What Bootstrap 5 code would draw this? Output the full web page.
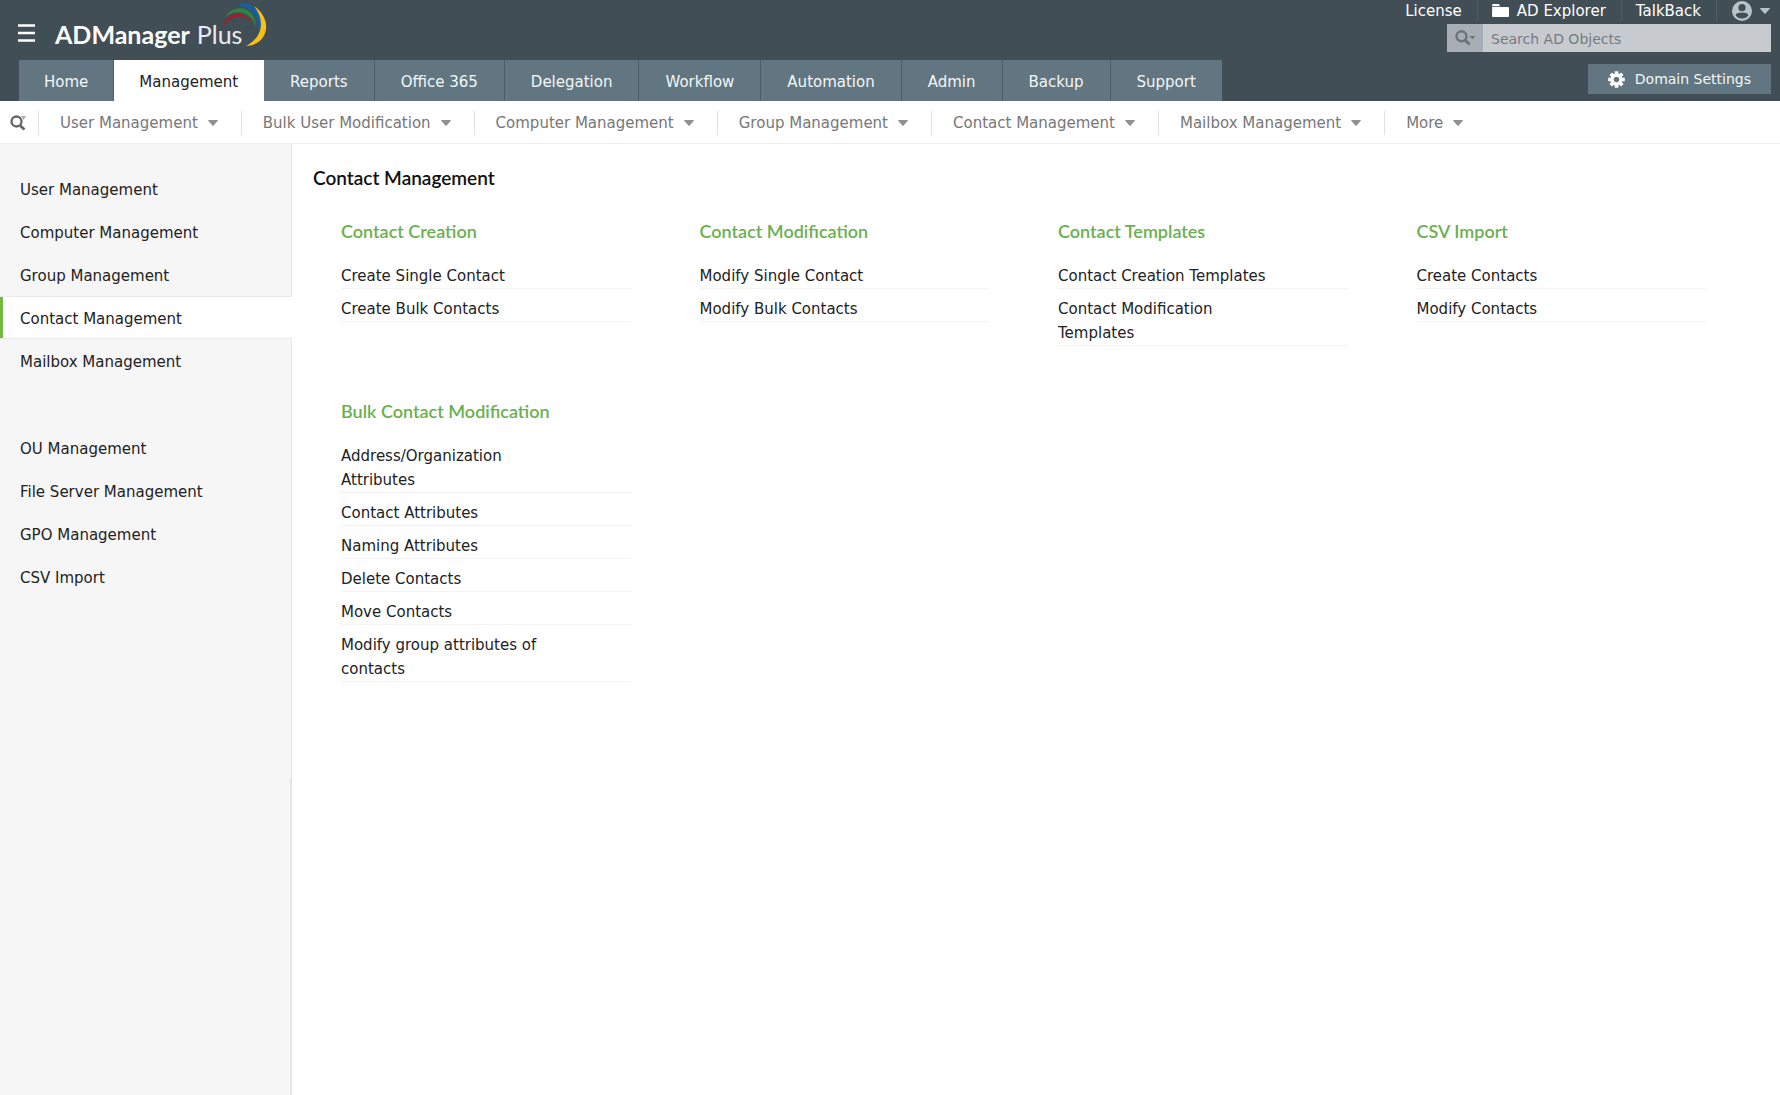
<!DOCTYPE html>
<html lang="en">
<head>
<meta charset="utf-8">
<meta name="viewport" content="width=device-width, initial-scale=1">
<title>ADManager Plus - Contact Management</title>
<link href="https://cdn.jsdelivr.net/npm/bootstrap@5.3.0/dist/css/bootstrap.min.css" rel="stylesheet">
<style>
body { font-family: "DejaVu Sans", Verdana, sans-serif; font-size: 15px; line-height: 24px; color: #222; background: #fff; }
a { color: inherit; text-decoration: none; }
svg { display: block; flex: none; }
.app-header { background: #424e55; color: #fff; }
.header-top { height: 60px; padding-right: 9px; }
.menu-btn { margin-left: 18px; margin-top: 24px; }
.brand { font-family: Lato, sans-serif; font-size: 25px; font-weight: 700; margin-left: 20px; margin-top: 22px; color: #fff; }
.brand-light { font-weight: 400; margin-left: 7px; color: #e9ecee; }
.brand-arc { left: 167px; top: -19px; }
.util-nav { height: 24px; }
.util-nav > li { height: 22px; padding: 0 15px 0 14px; border-right: 1px solid #505c63; display: flex; align-items: center; }
.util-nav > li:last-child { border: 0; padding: 0 1px 0 15px; }
.search-box { width: 324px; height: 28px; }
.search-type { width: 36px; background: #a7aeb6; color: #6b7278; }
.search-input { background: #c7cbcf; color: #555; font-size: 14px; padding: 2px 8px 0; min-width: 0; }
.search-input::placeholder { color: #747b80; opacity: 1; }
.header-tabs { padding: 0 9px 0 19px; }
.tab-link { display: block; height: 41px; line-height: 44px; padding: 0 25px; background: #617681; border-right: 1px solid #4c5d66; color: #f4f6f7; white-space: nowrap; }
li:nth-child(n+3) > .tab-link { padding: 0 26px; }
.tab-link.active { background: #fff; color: #222; border-color: #fff; }
li:last-child > .tab-link { border: 0; }
.domain-btn { background: #617681; color: #f4f6f7; font-size: 14px; height: 30px; padding: 0 20px; gap: 10px; margin-top: 4px; }
.sub-nav { height: 43px; padding-top: 2px; border-bottom: 1px solid #f0f0f0; color: #777; }
.sub-link { gap: 10px; height: 24px; padding: 0 23px 0 21px; border-left: 1px solid #e2e2e2; white-space: nowrap; }
.sub-link svg { color: #909090; }
.sub-search { width: 38px; color: #666; }
.shell { min-height: calc(100vh - 144px); }
.side-bar { width: 292px; flex: none; background: #f6f6f6; }
.side-list { min-height: 635px; padding-top: 23px; background: linear-gradient(#e6e6e6, #e6e6e6) right / 1px 100% no-repeat; }
.side-link { display: block; height: 43px; line-height: 46px; padding-left: 20px; }
.side-link.active { background: #fff; border: 1px solid #e9e9e9; border-width: 1px 0; line-height: 44px; box-shadow: inset 3px 0 0 #72b843; }
.side-gap { height: 44px; }
.side-fill { border-right: 2px solid #e2e5e5; }
.page-title { font: 600 19px/24px Lato, sans-serif; color: #111; margin: 22px 0 0 21px; }
.tool-grid { padding: 29px 5px 0 49px; row-gap: 53px; }
.tool-group { width: 25%; padding-right: 69px; }
.group-title { font: 600 18px/24px Lato, sans-serif; color: #6ab04f; margin: 0 0 13px; }
.tool-item { padding: 8px 57px 0 0; border-bottom: 1px solid #f3f3f3; }
</style>
<script src="https://cdn.jsdelivr.net/npm/bootstrap@5.3.0/dist/js/bootstrap.bundle.min.js"></script>
</head>
<body>
<svg width="0" height="0" class="position-absolute" aria-hidden="true">
  <symbol id="caret" viewBox="0 0 10 6"><path d="M.6 0h8.8q.8.2.2 1L5.6 5.4q-.6.5-1.2 0L.4 1Q-.2.2.6 0z" fill="currentColor"/></symbol>
</svg>

<header class="app-header">
  <div class="header-top d-flex align-items-start">
    <button class="menu-btn border-0 bg-transparent p-0 text-white" aria-label="Menu">
      <svg width="17" height="18" viewBox="0 0 17 18"><path d="M0 1.5h17M0 9h17M0 16.5h17" stroke="currentColor" stroke-width="2.6"/></svg>
    </button>
    <a href="#" class="brand position-relative d-flex text-nowrap"><span>ADManager</span><span class="brand-light">Plus</span>
      <svg class="brand-arc position-absolute" width="46" height="44" viewBox="0 0 46 44">
        <path d="M0 25C4 10 20 5 30 19C21 11 9 11 0 25z" fill="#a61c2e"/>
        <path d="M3 14C13-1 34 4 34 24C29 9 15 5 3 14z" fill="#2f8540"/>
        <path d="M15 2C32-4 46 15 36 32C39 16 31 4 15 2z" fill="#0f62a5"/>
        <path d="M32 3C52 17 46 42 24 43C40 35 44 18 32 3z" fill="#fdbf11"/>
      </svg>
    </a>
    <div class="ms-auto d-flex flex-column align-items-end">
      <ul class="util-nav list-unstyled d-flex mb-0 text-nowrap">
        <li><a href="#">License</a></li>
        <li><a href="#" class="d-flex align-items-center"><svg class="me-2" width="17" height="14" viewBox="0 0 17 14"><path d="M1 0h6l1 2.2H.2V1Q.2 0 1 0zM.2 3H16q1 0 1 1v8q0 1-1 1H1q-1 0-1-1z" fill="#fff"/></svg>AD Explorer</a></li>
        <li><a href="#">TalkBack</a></li>
        <li>
          <button class="border-0 bg-transparent p-0 d-flex align-items-center" aria-label="Account">
            <svg width="20" height="20" viewBox="0 0 20 20"><circle cx="10" cy="10" r="10" fill="#b9c2c8"/><circle cx="10" cy="6.7" r="3.6" fill="#424e55"/><path d="M3.6 14.3Q4.2 11.5 10 11.5t6.4 2.8Q14 17.5 10 17.5t-6.4-3.2z" fill="#424e55"/></svg>
            <svg class="ms-2" width="10" height="6" style="color:#b9c2c8"><use href="#caret"/></svg>
          </button>
        </li>
      </ul>
      <form class="search-box d-flex" role="search">
        <button type="button" class="search-type border-0 p-0 d-flex align-items-center justify-content-center" aria-label="Search type">
          <svg width="21" height="16" viewBox="0 0 21 16"><circle cx="6.5" cy="6.3" r="5" fill="none" stroke="currentColor" stroke-width="2.4"/><path d="M10 10l4.5 4.5" stroke="currentColor" stroke-width="2.8"/><path d="M14.5 6h6l-3 3.2z" fill="currentColor"/></svg>
        </button>
        <input type="text" class="search-input border-0 rounded-0 flex-grow-1" placeholder="Search AD Objects" aria-label="Search AD Objects">
      </form>
    </div>
  </div>
  <div class="header-tabs d-flex align-items-start">
    <ul class="list-unstyled d-flex mb-0">
      <li><a class="tab-link" href="#">Home</a></li>
      <li><a class="tab-link active" href="#" aria-current="page">Management</a></li>
      <li><a class="tab-link" href="#">Reports</a></li>
      <li><a class="tab-link" href="#">Office 365</a></li>
      <li><a class="tab-link" href="#">Delegation</a></li>
      <li><a class="tab-link" href="#">Workflow</a></li>
      <li><a class="tab-link" href="#">Automation</a></li>
      <li><a class="tab-link" href="#">Admin</a></li>
      <li><a class="tab-link" href="#">Backup</a></li>
      <li><a class="tab-link" href="#">Support</a></li>
    </ul>
    <button class="domain-btn ms-auto border-0 d-flex align-items-center text-nowrap">
      <svg width="17" height="17" viewBox="-8.5 -8.5 17 17"><g stroke="#fff" stroke-width="3.6"><path d="M0-8.3V-4M0 4V8.3M-8.3 0H-4M4 0H8.3M-5.8-5.8L-3-3M3 3L5.8 5.8M-5.8 5.8L-3 3M3-3L5.8-5.8"/><circle r="4.5" fill="none" stroke-width="3.4"/></g></svg>
      Domain Settings
    </button>
  </div>
</header>

<nav class="sub-nav d-flex align-items-center" aria-label="Management areas">
  <button class="sub-search border-0 bg-transparent py-0 pe-0 ps-2" aria-label="Find">
    <svg width="18" height="16" viewBox="0 0 18 16"><circle cx="8.5" cy="6.5" r="5" fill="none" stroke="currentColor" stroke-width="2.3"/><path d="M12 10.5l4.500 4" stroke="currentColor" stroke-width="2.8"/><path d="M13 1h5l-2.500 4z" fill="#aaa"/></svg>
  </button>
  <a href="#" class="sub-link d-flex align-items-center">User Management <svg width="10" height="6"><use href="#caret"/></svg></a>
  <a href="#" class="sub-link d-flex align-items-center">Bulk User Modification <svg width="10" height="6"><use href="#caret"/></svg></a>
  <a href="#" class="sub-link d-flex align-items-center">Computer Management <svg width="10" height="6"><use href="#caret"/></svg></a>
  <a href="#" class="sub-link d-flex align-items-center">Group Management <svg width="10" height="6"><use href="#caret"/></svg></a>
  <a href="#" class="sub-link d-flex align-items-center">Contact Management <svg width="10" height="6"><use href="#caret"/></svg></a>
  <a href="#" class="sub-link d-flex align-items-center">Mailbox Management <svg width="10" height="6"><use href="#caret"/></svg></a>
  <a href="#" class="sub-link d-flex align-items-center">More <svg width="10" height="6"><use href="#caret"/></svg></a>
</nav>

<div class="shell d-flex">
  <aside class="side-bar d-flex flex-column">
    <nav class="side-list" aria-label="Sections">
      <a class="side-link" href="#">User Management</a>
      <a class="side-link" href="#">Computer Management</a>
      <a class="side-link" href="#">Group Management</a>
      <a class="side-link active" href="#" aria-current="page">Contact Management</a>
      <a class="side-link" href="#">Mailbox Management</a>
      <div class="side-gap"></div>
      <a class="side-link" href="#">OU Management</a>
      <a class="side-link" href="#">File Server Management</a>
      <a class="side-link" href="#">GPO Management</a>
      <a class="side-link" href="#">CSV Import</a>
    </nav>
    <div class="side-fill flex-grow-1"></div>
  </aside>
  <main class="flex-grow-1">
    <h1 class="page-title">Contact Management</h1>
    <div class="tool-grid d-flex flex-wrap">
      <section class="tool-group">
        <h2 class="group-title">Contact Creation</h2>
        <ul class="list-unstyled mb-0">
          <li class="tool-item"><a href="#">Create Single Contact</a></li>
          <li class="tool-item"><a href="#">Create Bulk Contacts</a></li>
        </ul>
      </section>
      <section class="tool-group">
        <h2 class="group-title">Contact Modification</h2>
        <ul class="list-unstyled mb-0">
          <li class="tool-item"><a href="#">Modify Single Contact</a></li>
          <li class="tool-item"><a href="#">Modify Bulk Contacts</a></li>
        </ul>
      </section>
      <section class="tool-group">
        <h2 class="group-title">Contact Templates</h2>
        <ul class="list-unstyled mb-0">
          <li class="tool-item"><a href="#">Contact Creation Templates</a></li>
          <li class="tool-item"><a href="#">Contact Modification Templates</a></li>
        </ul>
      </section>
      <section class="tool-group">
        <h2 class="group-title">CSV Import</h2>
        <ul class="list-unstyled mb-0">
          <li class="tool-item"><a href="#">Create Contacts</a></li>
          <li class="tool-item"><a href="#">Modify Contacts</a></li>
        </ul>
      </section>
      <section class="tool-group">
        <h2 class="group-title">Bulk Contact Modification</h2>
        <ul class="list-unstyled mb-0">
          <li class="tool-item"><a href="#">Address/Organization Attributes</a></li>
          <li class="tool-item"><a href="#">Contact Attributes</a></li>
          <li class="tool-item"><a href="#">Naming Attributes</a></li>
          <li class="tool-item"><a href="#">Delete Contacts</a></li>
          <li class="tool-item"><a href="#">Move Contacts</a></li>
          <li class="tool-item"><a href="#">Modify group attributes of contacts</a></li>
        </ul>
      </section>
    </div>
  </main>
</div>
</body>
</html>
